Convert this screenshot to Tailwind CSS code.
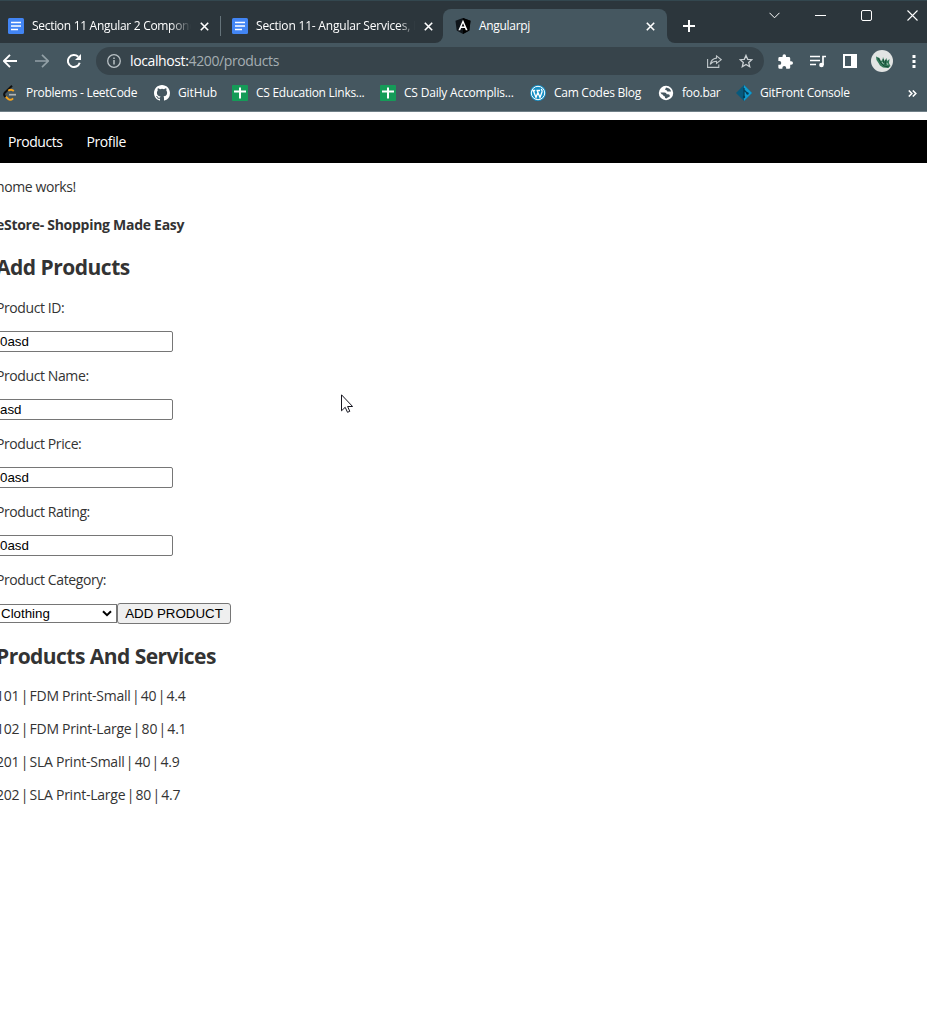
<!DOCTYPE html>
<html lang="en">
<head>
<meta charset="utf-8">
<title>Angularpj</title>
<script src="https://cdn.jsdelivr.net/npm/@tailwindcss/browser@4"></script>
</head>
<body class="h-[1030px] w-[927px] overflow-hidden bg-white font-['Open_Sans','Noto_Sans',sans-serif]">
<header class="relative h-28 overflow-hidden border-b border-[#6f7f87] bg-[#455760] text-xs text-white">
  <!-- Tab strip -->
  <div class="relative flex h-[43px] border-t border-[#33474f] bg-[#2c363c]">
    <div class="flex h-[34px] w-[220px] items-center pl-2 mt-2">
      <svg class="h-4 w-4 shrink-0" viewBox="0 0 16 16"><rect width="16" height="16" rx="1.5" fill="#4285f4"/><path d="M3 4.5h10M3 8h10M3 11.500h7" stroke="#fff" stroke-width="1.7"/></svg>
      <div class="ml-2 w-[159px] overflow-hidden whitespace-nowrap tracking-[-0.3px] [mask-image:linear-gradient(90deg,#000_87%,transparent)]">Section 11 Angular 2 Components</div>
      <svg class="ml-[9px] h-[9px] w-[9px] shrink-0" viewBox="0 0 9 9"><path d="M.8.8l7.400 7.400M8.200.8L.8 8.200" stroke="#fff" stroke-width="1.600"/></svg>
    </div>
    <div class="mt-[15px] h-5 w-px bg-[#65737a]"></div>
    <div class="mt-2 flex h-[34px] w-[222px] items-center pl-[11px]">
      <svg class="h-4 w-4 shrink-0" viewBox="0 0 16 16"><rect width="16" height="16" rx="1.500" fill="#4285f4"/><path d="M3 4.500h10M3 8h10M3 11.500h7" stroke="#fff" stroke-width="1.700"/></svg>
      <div class="ml-2 w-[159px] overflow-hidden whitespace-nowrap tracking-[-0.2px] [mask-image:linear-gradient(90deg,#000_90%,transparent)]">Section 11- Angular Services, HTTP</div>
      <svg class="ml-[9px] h-[9px] w-[9px] shrink-0" viewBox="0 0 9 9"><path d="M.8.8l7.400 7.400M8.200.8L.8 8.200" stroke="#fff" stroke-width="1.600"/></svg>
    </div>
    <div class="relative mt-2 flex h-[34px] w-[224px] items-center rounded-t-lg bg-[#455760] pl-3">
      <svg class="absolute bottom-0 -left-2 h-2 w-2" viewBox="0 0 8 8"><path d="M8 0v8H0a8 8 0 0 0 8-8z" fill="#455760"/></svg>
      <svg class="absolute -right-2 bottom-0 h-2 w-2" viewBox="0 0 8 8"><path d="M0 0v8h8a8 8 0 0 1-8-8z" fill="#455760"/></svg>
      <svg class="h-4 w-4 shrink-0" viewBox="0 0 16 16"><path d="M8 0l7.500 2.700-1.200 9.800L8 16l-6.300-3.500L.5 2.700z" fill="#10151a"/><path d="M8 0l7.500 2.700-1.200 9.800L8 16z" fill="#000"/><path d="M8 1.800L3.400 12.200h1.800l.9-2.300h3.800l.9 2.300h1.800zm0 3.500l1.400 3.200H6.600z" fill="#fff"/></svg>
      <div class="ml-2 w-[159px] whitespace-nowrap tracking-[-0.3px]">Angularpj</div>
      <svg class="ml-2 h-[9px] w-[9px] shrink-0" viewBox="0 0 9 9"><path d="M.8.8l7.400 7.400M8.200.8L.8 8.200" stroke="#fff" stroke-width="1.600"/></svg>
    </div>
    <svg class="mt-[19px] ml-4 h-3 w-3" viewBox="0 0 12 12"><path d="M6 0v12M0 6h12" stroke="#fff" stroke-width="2"/></svg>
    <div class="ml-[74px] flex items-start pt-2">
      <svg class="mt-[3px] h-[7px] w-[11px]" viewBox="0 0 11 7"><path d="M.5.800l5 5 5-5" stroke="#fff" fill="none"/></svg>
      <svg class="mt-[6px] ml-[35px] h-px w-[11px]" viewBox="0 0 11 1"><path d="M0 .500h11" stroke="#fff"/></svg>
      <svg class="mt-px ml-[35px] h-[11px] w-[11px]" viewBox="0 0 11 11"><rect x=".5" y=".5" width="10" height="10" rx="1.500" stroke="#fff" fill="none"/></svg>
      <svg class="mt-px ml-[35px] h-[11px] w-[11px]" viewBox="0 0 11 11"><path d="M.5.5l10 10M10.500.500l-10 10" stroke="#fff" stroke-width="1.100"/></svg>
    </div>
  </div>
  <!-- Address bar -->
  <div class="flex h-9 items-center">
    <svg class="ml-[3px] h-[14px] w-[14px]" viewBox="0 0 14 14"><path d="M14 7H1.500M7 .8L.8 7 7 13.200" stroke="#fff" stroke-width="1.900" fill="none"/></svg>
    <svg class="ml-[18px] h-[14px] w-[14px]" viewBox="0 0 14 14"><path d="M0 7h12.500M7 .8L13.200 7 7 13.200" stroke="#92a0a6" stroke-width="1.700" fill="none"/></svg>
    <svg class="ml-[18px] h-[14px] w-[14px]" viewBox="0 0 14 14"><path d="M12.700 8.700A6 6 0 1 1 11.200 2.800" stroke="#fff" stroke-width="2" fill="none"/><path d="M14 0v6H8z" fill="#fff"/></svg>
    <div class="ml-[15px] flex h-7 w-[668px] items-center rounded-full bg-[#37444b] pl-[11px]">
      <svg class="h-[14px] w-[14px]" viewBox="0 0 14 14"><circle cx="7" cy="7" r="6.300" fill="none" stroke="#b9c1c5" stroke-width="1.300"/><path d="M7 6v4.500M7 3.400v1.500" stroke="#b9c1c5" stroke-width="1.500"/></svg>
      <div class="ml-[9px] flex-1 text-sm tracking-[-0.38px] whitespace-nowrap text-[#a5aeb2]"><span class="text-white">localhost:</span>4200/products</div>
      <svg class="h-[13px] w-[15px]" viewBox="0 0 15 13"><path d="M.6 4v8.400h11.200V9.500M9.500.9l4.800 3.800-4.800 3.700V6.300C6.500 6.300 4.700 7.300 3.200 9.300c.5-3 2.400-5.800 6.300-6.200z" stroke="#c0c7ca" stroke-width="1.100" fill="none"/></svg>
      <svg class="mr-[11px] ml-[17px] h-[14px] w-[14px]" viewBox="0 0 14 14"><path d="M7 1.400l1.700 3.900 4.200.4-3.200 2.800 1 4.200L7 10.500l-3.700 2.200 1-4.200L1.100 5.700l4.200-.4z" stroke="#cbd1d4" stroke-width="1.300" fill="none"/></svg>
    </div>
    <svg class="ml-[14px] h-[15px] w-[15px]" viewBox="1.500 1 21.500 21"><path d="M20.500 11H19V7a2 2 0 0 0-2-2h-4V3.500a2.500 2.500 0 0 0-5 0V5H4a2 2 0 0 0-2 2v3.800h1.500a2.700 2.700 0 0 1 0 5.400H2V20a2 2 0 0 0 2 2h3.800v-1.500a2.700 2.700 0 0 1 5.400 0V22H17a2 2 0 0 0 2-2v-4h1.500a2.500 2.500 0 0 0 0-5z" fill="#fff"/></svg>
    <svg class="ml-[17px] h-[13px] w-4" viewBox="0 0 16 13"><path d="M0 1.500h10M0 5.500h10M0 9.500h6M13 10V1.500h3" stroke="#fff" stroke-width="1.700" fill="none"/><circle cx="11.500" cy="10" r="2.300" fill="#fff"/></svg>
    <svg class="ml-[17px] h-[14px] w-[14px]" viewBox="0 0 14 14"><path d="M0 0h14v14H0zM2 2v10h6V2z" fill="#fff" fill-rule="evenodd"/></svg>
    <svg class="ml-[14px] h-[22px] w-[22px]" viewBox="0 0 22 22"><circle cx="11" cy="11" r="11" fill="#e2e4e3"/><path d="M5 6.500l3.500 1.500 1.500 3 1.500-1 .5-3 1.500 4 2-3 .5 3 2.500-2-.5 4 1.500 3-2.500 2-5-.5-3-2-1.500-2.500-2-3z" fill="#34795a"/><path d="M7 8l3 5 3 3M12 9l1 4M15 10l-1 5M13 16l5 1" stroke="#174c37" fill="none"/><path d="M11 12l1.500 2M16 13l1 2" stroke="#b9d0c4" stroke-width=".8"/></svg>
    <svg class="ml-[19px] h-[13px] w-1" viewBox="0 0 4 13"><path d="M.5 0h3v3h-3zM.5 5h3v3h-3zM.5 10h3v3h-3z" fill="#fff"/></svg>
  </div>
  <!-- Bookmarks -->
  <nav class="flex h-7 items-center whitespace-nowrap tracking-[-0.27px]">
    <div class="flex w-[154px] items-center pl-[3px]">
      <svg class="mr-[9px] h-4 w-[14px]" viewBox="0 0 14 16"><path d="M9 .8L2 7.500q-1.600 1.700-.2 3.700l1 1.200" stroke="#111" stroke-width="2" fill="none"/><path d="M10.800 6Q8 3.500 5.300 5.800M2.800 11.800l2.400 2.200q2.300 2 4.900-.7" stroke="#f7a41d" stroke-width="1.900" fill="none"/><path d="M6 9.700h7" stroke="#b3b3b3" stroke-width="1.700"/></svg>
      <span>Problems - LeetCode</span>
    </div>
    <div class="flex w-[78px] items-center">
      <svg class="mr-2 h-4 w-4" viewBox="0 0 16 16"><path fill="#fff" d="M8 0C3.580 0 0 3.580 0 8c0 3.540 2.290 6.530 5.470 7.590.4.070.55-.17.55-.38 0-.19-.01-.82-.01-1.490-2.010.37-2.530-.49-2.690-.94-.09-.23-.48-.94-.82-1.130-.28-.15-.68-.52-.01-.53.63-.01 1.080.58 1.230.82.72 1.210 1.870.87 2.330.66.07-.52.28-.87.51-1.070-1.780-.2-3.640-.89-3.640-3.950 0-.87.31-1.590.82-2.150-.08-.2-.36-1.020.08-2.120 0 0 .67-.21 2.200.82a7.600 7.600 0 0 1 4 0c1.530-1.040 2.200-.82 2.200-.82.44 1.100.16 1.920.08 2.120.51.56.82 1.270.82 2.150 0 3.070-1.870 3.750-3.650 3.950.29.25.54.73.54 1.480 0 1.070-.01 1.930-.01 2.200 0 .21.15.46.55.38A8 8 0 0 0 16 8c0-4.420-3.580-8-8-8z"/></svg>
      <span class="tracking-[-0.1px]">GitHub</span>
    </div>
    <div class="flex w-[148px] items-center">
      <svg class="mr-2 h-4 w-4" viewBox="0 0 16 16"><rect width="16" height="16" rx="1" fill="#159b58"/><path d="M8 2.500v11M2 6.500h12" stroke="#fff" stroke-width="2"/></svg>
      <span>CS Education Links...</span>
    </div>
    <div class="flex w-[150px] items-center">
      <svg class="mr-2 h-4 w-4" viewBox="0 0 16 16"><rect width="16" height="16" rx="1" fill="#159b58"/><path d="M8 2.500v11M2 6.500h12" stroke="#fff" stroke-width="2"/></svg>
      <span class="tracking-[-0.2px]">CS Daily Accomplis...</span>
    </div>
    <div class="flex w-[128px] items-center">
      <svg class="mr-2 h-4 w-4" viewBox="0 0 16 16"><circle cx="8" cy="8" r="8" fill="#168fc5"/><circle cx="8" cy="8" r="6.700" fill="none" stroke="#fff" stroke-width="1"/><path d="M2.200 5.500h3M6.500 5.500h3.500M3.300 5.500l2.700 7 2-5.500M7.200 5.500l2.800 7L12 7q.4-1.500-.8-3" stroke="#fff" stroke-width="1.300" fill="none"/></svg>
      <span>Cam Codes Blog</span>
    </div>
    <div class="flex w-[78px] items-center">
      <svg class="mr-2 h-4 w-4" viewBox="0 0 16 16"><circle cx="8" cy="8" r="7.200" fill="#fff"/><path d="M2.500 7.500h4q2 0 2.200 1.700h1.600q1.500 0 1.500 1.500t-1.700 1.500L8.500 13.500 7 13v-1.500q-2 0-2-1.700-1.500 0-2.500-2.300zM8 2.500l-1 2.300q2 .2 2.300 1.700h3.800q-.7-3.500-5.100-4z" fill="#455760"/></svg>
      <span class="tracking-[-0.3px]">foo.bar</span>
    </div>
    <div class="flex flex-1 items-center">
      <svg class="mr-2 h-4 w-4" viewBox="0 0 16 16"><path d="M8 0l8 8-8 8-8-8z" fill="#075a7d"/><path d="M8 0l8 8-8 8z" fill="#109bd0"/><path d="M8 3v9M8 5l3.500 3.500" stroke="#063f57" stroke-width="1.300"/><circle cx="8" cy="12" r="1.200" fill="#063f57"/><circle cx="11.500" cy="8.500" r="1.200" fill="#063f57"/></svg>
      <span>GitFront Console</span>
    </div>
    <svg class="mr-[10px] h-[7px] w-[9px]" viewBox="0 0 9 7"><path d="M.8.500l3 3-3 3M4.800.500l3 3-3 3" stroke="#fff" stroke-width="1.600" fill="none"/></svg>
  </nav>
</header>

<nav class="mt-2 flex h-[43px] items-center gap-6 bg-black pl-2 text-sm text-white">
  <a class="tracking-[-0.45px]">Products</a>
  <a class="tracking-[-0.4px]">Profile</a>
</nav>

<main class="-ml-1 pt-[14px] text-sm leading-5 tracking-[-0.4px] whitespace-nowrap text-[#333]">
  <p>home works!</p>
  <h4 class="mt-[18px] font-bold tracking-[-0.28px]">eStore- Shopping Made Easy</h4>
  <h2 class="mt-[17px] text-[21px] leading-[30px] font-bold tracking-[-0.5px]">Add Products</h2>
  <form>
    <p class="mt-4">Product ID:</p>
    <input value="0asd" class="mt-[13px] block h-[21px] w-[177px] rounded-xs border border-[#767676] px-[3px] font-['Liberation_Sans',sans-serif] text-[13.333px] tracking-normal text-black">
    <p class="mt-[14px]">Product Name:</p>
    <input value="asd" class="mt-[13px] block h-[21px] w-[177px] rounded-xs border border-[#767676] px-[3px] font-['Liberation_Sans',sans-serif] text-[13.333px] tracking-normal text-black">
    <p class="mt-[14px]">Product Price:</p>
    <input value="0asd" class="mt-[13px] block h-[21px] w-[177px] rounded-xs border border-[#767676] px-[3px] font-['Liberation_Sans',sans-serif] text-[13.333px] tracking-normal text-black">
    <p class="mt-[14px]">Product Rating:</p>
    <input value="0asd" class="mt-[13px] block h-[21px] w-[177px] rounded-xs border border-[#767676] px-[3px] font-['Liberation_Sans',sans-serif] text-[13.333px] tracking-normal text-black">
    <p class="mt-[14px]">Product Category:</p>
    <div class="mt-[13px] flex h-[21px] items-center font-['Liberation_Sans',sans-serif] text-[13.333px] tracking-normal text-black">
      <div class="relative">
        <select class="block h-[19px] w-[121px] appearance-none border border-[#767676] bg-white pl-1 leading-[17px]"><option>Clothing</option></select>
        <svg class="pointer-events-none absolute top-[6px] right-[5px] h-[7px] w-[10px]" viewBox="0 0 10 7"><path d="M1 1.200l4 4 4-4" stroke="#000" stroke-width="2" fill="none"/></svg>
      </div>
      <button type="button" class="h-[21px] w-[114px] rounded-[3px] border border-[#767676] bg-[#efefef] leading-[19px]">ADD PRODUCT</button>
    </div>
  </form>
  <h2 class="mt-[17px] text-[21px] leading-[30px] font-bold tracking-[-0.54px]">Products And Services</h2>
  <ul class="mt-[15px] flex flex-col gap-[13px] tracking-[-0.25px]">
    <li>101 <span class="-mx-[2px]">|</span> FDM Print-Small <span class="-mx-[2px]">|</span> 40 <span class="-mx-[2px]">|</span> 4.4</li>
    <li>102 <span class="-mx-[2px]">|</span> FDM Print-Large <span class="-mx-[2px]">|</span> 80 <span class="-mx-[2px]">|</span> 4.1</li>
    <li>201 <span class="-mx-[2px]">|</span> SLA Print-Small <span class="-mx-[2px]">|</span> 40 <span class="-mx-[2px]">|</span> 4.9</li>
    <li>202 <span class="-mx-[2px]">|</span> SLA Print-Large <span class="-mx-[2px]">|</span> 80 <span class="-mx-[2px]">|</span> 4.7</li>
  </ul>
</main>

<svg class="absolute top-[394px] left-[341px] h-5 w-3" viewBox="0 0 12 20"><path d="M.5.800v16l3.700-3.500 2.300 5 2.300-1-2.200-4.800h5z" fill="#fff" stroke="#15151f"/></svg>
</body>
</html>
